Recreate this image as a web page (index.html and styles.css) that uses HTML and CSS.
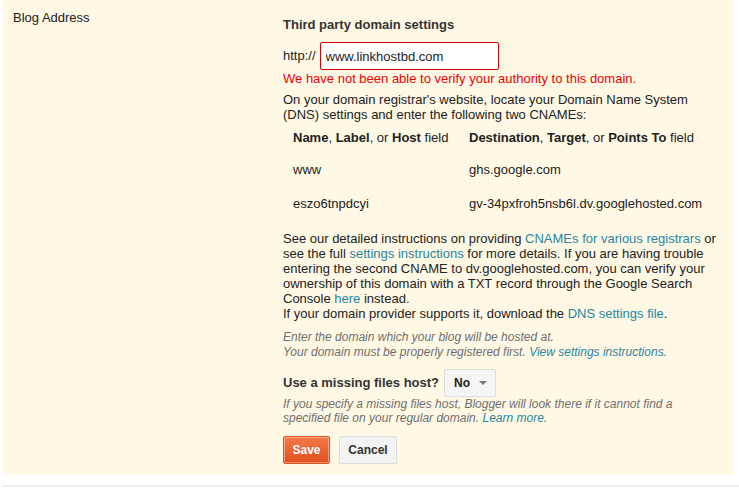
FILE: index.html
```html
<!DOCTYPE html>
<html>
<head>
<meta charset="utf-8">
<link rel="stylesheet" href="styles.css">
</head>
<body>
<div class="panel">
  <div class="label">Blog Address</div>
  <div class="content">
    <h3 class="title">Third party domain settings</h3>
    <div class="url-row">
      <span class="prefix">http://</span>
      <input class="url-input" type="text" value="www.linkhostbd.com">
    </div>
    <div class="error">We have not been able to verify your authority to this domain.</div>
    <p class="desc">On your domain registrar's website, locate your Domain Name System (DNS) settings and enter the following two CNAMEs:</p>
    <table class="cnames">
      <thead>
        <tr>
          <th class="col1"><b>Name</b>, <b>Label</b>, or <b>Host</b> field</th>
          <th><b>Destination</b>, <b>Target</b>, or <b>Points To</b> field</th>
        </tr>
      </thead>
      <tbody>
        <tr><td class="col1">www</td><td>ghs.google.com</td></tr>
        <tr><td class="col1">eszo6tnpdcyi</td><td>gv-34pxfroh5nsb6l.dv.googlehosted.com</td></tr>
      </tbody>
    </table>
    <p class="more">See our detailed instructions on providing <a href="#">CNAMEs for various registrars</a> or see the full <a href="#">settings instructions</a> for more details. If you are having trouble entering the second CNAME to dv.googlehosted.com, you can verify your ownership of this domain with a TXT record through the Google Search Console <a href="#">here</a> instead.<br>If your domain provider supports it, download the <a href="#">DNS settings file</a>.</p>
    <p class="hint first">Enter the domain which your blog will be hosted at.<br>Your domain must be properly registered first. <a href="#">View settings instructions</a>.</p>
    <div class="missing-row">
      <span class="missing-label">Use a missing files host?</span>
      <span class="select">No <span class="caret"></span></span>
    </div>
    <p class="hint second">If you specify a missing files host, Blogger will look there if it cannot find a specified file on your regular domain. <a href="#">Learn more</a>.</p>
    <div class="buttons">
      <button class="btn save">Save</button>
      <button class="btn cancel">Cancel</button>
    </div>
  </div>
</div>
<div class="divider"></div>
</body>
</html>
```
FILE: styles.css
```css
html, body {
  margin: 0;
  padding: 0;
  background: #ffffff;
}
body {
  font-family: "Liberation Sans", Arial, sans-serif;
  font-size: 13px;
  color: #222222;
  width: 739px;
}
.panel {
  margin-left: 3px;
  width: 730px;
  background: #fff8e5;
  display: grid;
  grid-template-columns: 280px 440px;
  padding-bottom: 11px;
}
.label {
  padding: 10px 0 0 10px;
  line-height: 15px;
  color: #222;
}
.content {
  padding-top: 17px;
  line-height: 15px;
}
.title {
  margin: 0;
  font-size: 13px;
  font-weight: bold;
  line-height: 15px;
  color: #333;
}
.url-row {
  margin-top: 10px;
  display: flex;
  align-items: center;
  height: 28px;
}
.prefix {
  color: #222;
  margin-right: 4px;
  position: relative;
  top: -1px;
}
.url-input {
  box-sizing: border-box;
  width: 179px;
  height: 28px;
  border: 1px solid #e00000;
  border-radius: 2px;
  padding: 0 5px;
  font-family: "Liberation Sans", Arial, sans-serif;
  font-size: 13px;
  color: #222;
  background: #fff;
  outline: none;
}
.error {
  margin-top: 1px;
  color: #f00000;
}
.desc {
  margin: 6px 0 0 0;
}
.cnames {
  border-collapse: collapse;
  margin: 0;
}
.cnames th {
  font-weight: normal;
  text-align: left;
  padding: 8px 10px 8px 10px;
  color: #222;
}
.cnames td {
  padding: 9px 10px 10px 10px;
  color: #222;
}
.cnames .col1 {
  width: 156px;
}
.more {
  margin: 10px 0 0 0;
}
a {
  color: #2786a2;
  text-decoration: none;
}
.hint {
  margin: 0;
  font-size: 12px;
  font-style: italic;
  color: #6f6f6f;
}
.hint.first {
  margin-top: 9px;
  line-height: 15px;
}
.hint.second {
  line-height: 14px;
}
.missing-row {
  margin-top: 9px;
  display: flex;
  align-items: center;
  height: 28px;
}
.missing-label {
  font-weight: bold;
  color: #333;
  margin-right: 5px;
  position: relative;
  top: -1px;
}
.select {
  box-sizing: border-box;
  width: 52px;
  height: 28px;
  border: 1px solid #dcdcdc;
  border-radius: 2px;
  background: #f5f5f5;
  display: flex;
  align-items: center;
  padding-left: 9px;
  font-weight: bold;
  font-size: 12px;
  color: #222;
}
.caret {
  display: inline-block;
  width: 0;
  height: 0;
  border-left: 4px solid transparent;
  border-right: 4px solid transparent;
  border-top: 4px solid #777;
  margin-left: 9px;
}
.buttons {
  margin-top: 11px;
  display: flex;
  gap: 9px;
}
.btn {
  box-sizing: border-box;
  height: 28px;
  border-radius: 2px;
  font-family: "Liberation Sans", Arial, sans-serif;
  font-size: 12px;
  font-weight: bold;
  padding: 0;
  cursor: pointer;
}
.save {
  width: 47px;
  color: #fff;
  background: linear-gradient(#f47a4c, #e14e1e);
  border: 1px solid #e4541f;
  box-shadow: inset 0 0 0 1px rgba(255, 200, 170, 0.6);
}
.cancel {
  width: 58px;
  color: #333;
  background: #f3f3f3;
  border: 1px solid #dcdcdc;
}
.divider {
  margin: 10px 0 0 3px;
  height: 2px;
  background: #ececec;
}
```
